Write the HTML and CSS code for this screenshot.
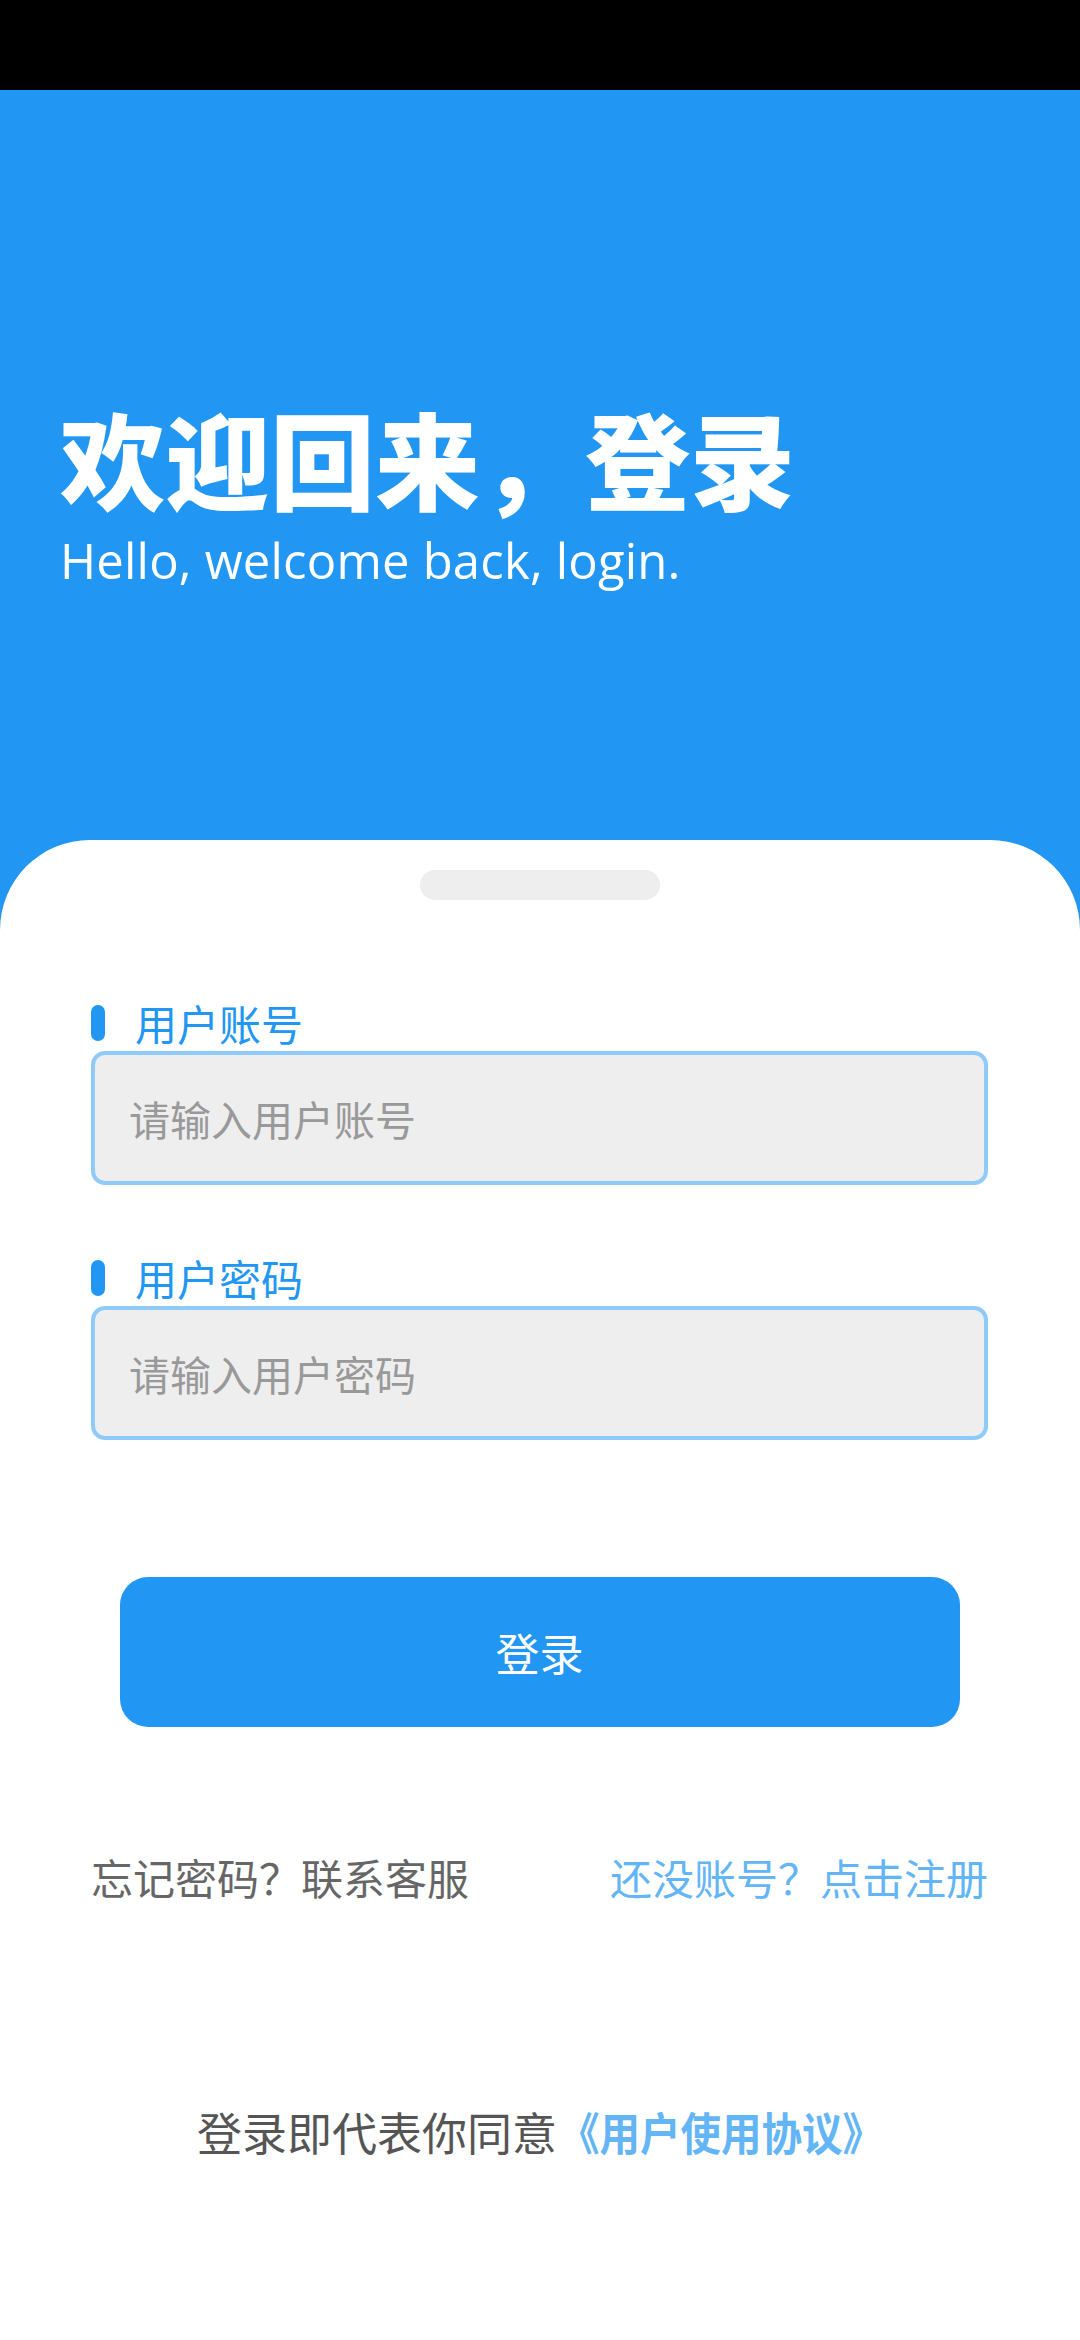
FILE: index.html
```html
<!DOCTYPE html>
<html lang="zh-CN">
<head>
<meta charset="utf-8">
<meta name="viewport" content="width=1080">
<title>登录</title>
<link rel="stylesheet" href="styles.css">
</head>
<body>
<div class="page">
  <div class="statusbar"></div>
  <header class="hero">
    <h1 class="hero-title">欢迎回来，登录</h1>
    <p class="hero-sub">Hello, welcome back, login.</p>
  </header>
  <main class="card">
    <div class="handle"></div>
    <form class="form">
      <label class="field-label"><span class="bar"></span><span>用户账号</span></label>
      <input class="field-input" type="text" placeholder="请输入用户账号">
      <label class="field-label second"><span class="bar"></span><span>用户密码</span></label>
      <input class="field-input" type="password" placeholder="请输入用户密码">
      <button class="login-btn" type="button">登录</button>
    </form>
    <div class="links">
      <span class="link-gray">忘记密码？联系客服</span>
      <span class="link-blue">还没账号？点击注册</span>
    </div>
    <p class="agree"><span class="agree-text">登录即代表你同意</span><span class="agree-link">《用户使用协议》</span></p>
  </main>
</div>
</body>
</html>
```

FILE: styles.css
```css
* { box-sizing: border-box; }
html, body { margin: 0; padding: 0; }
body {
  width: 1080px;
  height: 2340px;
  overflow: hidden;
  font-family: "Noto Sans CJK SC", "Noto Sans", sans-serif;
  background: #ffffff;
}
.page {
  display: flex;
  flex-direction: column;
  height: 2340px;
  background: #2196f3;
}
.statusbar {
  height: 90px;
  background: #000000;
  flex: none;
}
.hero {
  height: 750px;
  flex: none;
  padding: 306px 0 0 60px;
  color: #ffffff;
}
.hero-title {
  margin: 0;
  font-size: 105px;
  line-height: 120px;
  font-weight: 900;
  letter-spacing: 0;
}
.hero-sub {
  margin: 16px 0 0;
  font-family: "Open Sans", "Noto Sans", sans-serif;
  font-size: 49px;
  line-height: 56px;
  font-weight: 400;
  letter-spacing: 0.2px;
}
.card {
  flex: 1;
  background: #ffffff;
  border-radius: 90px 90px 0 0;
  display: flex;
  flex-direction: column;
  align-items: stretch;
}
.handle {
  width: 240px;
  height: 30px;
  margin: 30px auto 0;
  background: #eeeeee;
  border-radius: 15px;
}
.form {
  display: flex;
  flex-direction: column;
  padding: 100px 92px 0 91px;
}
.field-label {
  display: flex;
  align-items: center;
  gap: 30px;
  height: 46px;
  font-size: 42px;
  line-height: 46px;
  color: #2196f3;
}
.field-label.second { margin-top: 70px; }
.bar {
  width: 14px;
  height: 36px;
  border-radius: 7px;
  background: #2196f3;
}
.field-input {
  margin-top: 5px;
  height: 134px;
  width: 100%;
  border: 4px solid #90caf9;
  border-radius: 14px;
  background: #eeeeee;
  padding: 0 0 0 34px;
  font-family: "Noto Sans CJK SC", "Noto Sans", sans-serif;
  font-size: 41px;
  color: #333333;
  outline: none;
}
.field-input::placeholder { color: #999999; }
.login-btn {
  margin: 137px auto 0;
  width: 840px;
  height: 150px;
  border: none;
  border-radius: 28px;
  background: #2196f3;
  color: #ffffff;
  font-family: "Noto Sans CJK SC", "Noto Sans", sans-serif;
  font-size: 44px;
}
.links {
  display: flex;
  justify-content: space-between;
  padding: 0 92px 0 91px;
  margin-top: 125px;
  font-size: 42px;
  line-height: 50px;
}
.link-gray { color: #666666; }
.link-blue { color: #64b5f6; }
.agree {
  margin: 203px 0 0;
  display: flex;
  justify-content: center;
  font-size: 45px;
  line-height: 54px;
  color: #555555;
}
.agree-link {
  display: inline-block;
  color: #64b5f6;
  font-weight: 700;
  transform: scaleX(0.9);
  transform-origin: left center;
  margin-left: 2px;
  margin-right: -36px;
}
```
